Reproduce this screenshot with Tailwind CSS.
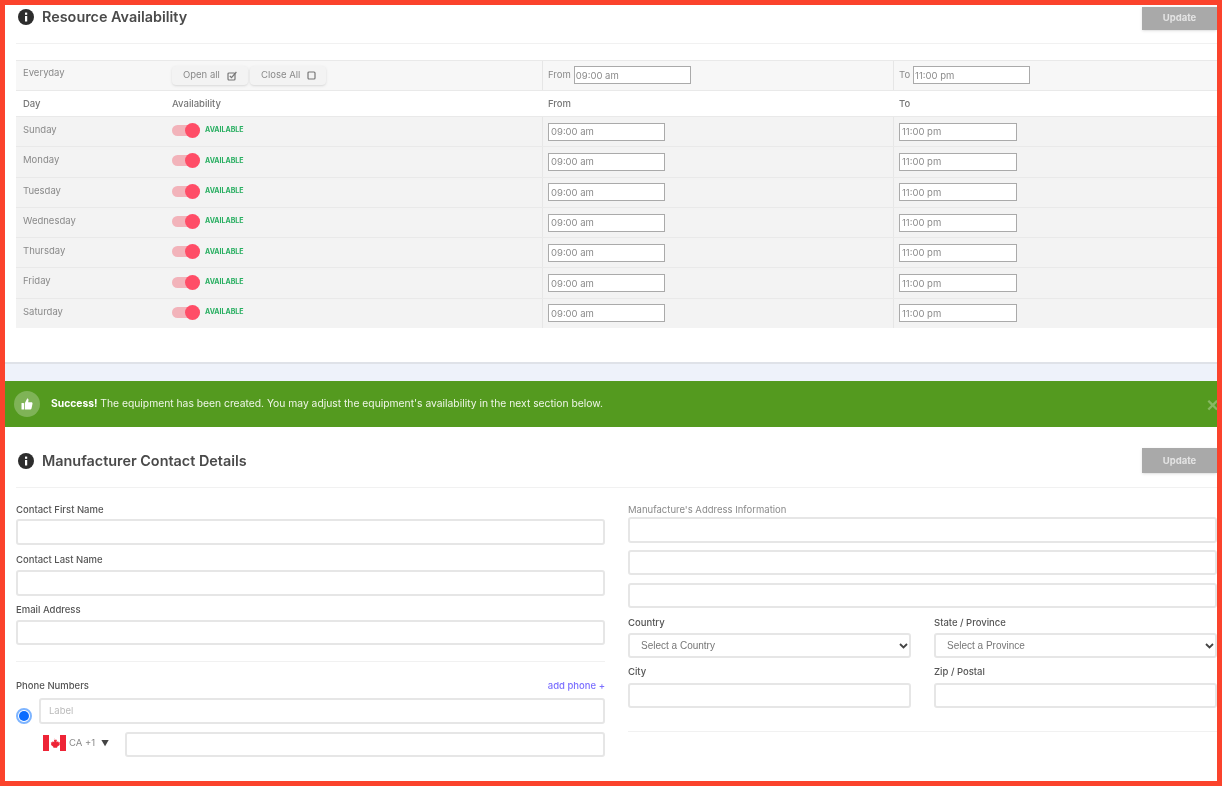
<!DOCTYPE html>
<html lang="en">
	<head>
		<meta charset="UTF-8" />
		<script src="https://cdn.jsdelivr.net/npm/@tailwindcss/browser@4"></script>
		<title>Resource Availability</title>
	</head>

	<body class="bg-white font-['Inter',sans-serif] text-[#8a8a8a]">
		<div class="relative w-[1222px] h-[786px]">
			<div class="h-full overflow-hidden bg-white blur-[0.5px]">
				<!-- resource availability -->
				<section class="h-[364px] w-[1217px] border-b-2 border-[#dfe2e8]">
					<div class="flex justify-between h-[44px] ml-[16px] border-b border-[#f1f1f1]">
						<div class="flex items-center gap-[8px] h-[34px] pl-[2px]">
							<svg class="w-[16px] h-[16px]" viewBox="0 0 16 16"><circle cx="8" cy="8" r="8" fill="#2d2d2d" /><rect x="7" y="7" width="2.2" height="5.5" fill="#fff" /><rect x="7" y="3.6" width="2.2" height="2.2" fill="#fff" /></svg>
							<h2 class="text-[14.4px] font-semibold text-[#4a4a4a]">Resource Availability</h2>
						</div>
						<button class="mt-[7px] w-[75px] h-[23px] bg-[#a9a9a9] text-[#e4e4e4] text-[9.5px] font-bold shadow-sm">Update</button>
					</div>

					<div class="ml-[16px] mt-[16px] text-[9.5px]">
						<div class="grid grid-cols-[156px_370px_351px_1fr] h-[31px] bg-[#f7f7f7] border-y border-[#e9e9e9]">
							<div class="pl-[7px] pt-[5px]">Everyday</div>
							<div class="flex items-start pt-[5px] gap-[2px]">
								<span class="flex items-center gap-[7px] w-[76px] h-[19px] pl-[11px] bg-[#f3f3f3] rounded-sm shadow-sm">Open all
									<svg class="w-[10px] h-[10px]" viewBox="0 0 10 10" fill="none" stroke="#777" stroke-width="1.2"><rect x="1" y="2" width="7" height="7" rx="1" /><path d="M2.8 5l1.7 1.7L9.4 1" /></svg>
								</span>
								<span class="flex items-center gap-[7px] w-[76px] h-[19px] pl-[11px] bg-[#f3f3f3] rounded-sm shadow-sm">Close All
									<svg class="w-[9px] h-[9px]" viewBox="0 0 9 9" fill="none" stroke="#777" stroke-width="1.2"><rect x="1" y="1" width="7" height="7" rx="1" /></svg>
								</span>
							</div>
							<div class="flex items-start pt-[5px] gap-[3px] pl-[5px] border-l border-[#e6e6e6]"><span class="pt-[2px]">From</span>
								<input class="w-[117px] h-[18px] pl-[1px] bg-white border-[1.5px] border-[#aaaaaa] outline-none" value="09:00 am" />
							</div>
							<div class="flex items-start pt-[5px] gap-[3px] pl-[5px] border-l border-[#e6e6e6]"><span class="pt-[2px]">To</span>
								<input class="w-[117px] h-[18px] pl-[1px] bg-white border-[1.5px] border-[#aaaaaa] outline-none" value="11:00 pm" />
							</div>
						</div>

						<div class="grid grid-cols-[156px_370px_351px_1fr] items-center h-[25px] pt-[1px] font-medium text-[#777]">
							<div class="pl-[7px]">Day</div>
							<div>Availability</div>
							<div class="pl-[6px]">From</div>
							<div class="pl-[6px]">To</div>
						</div>

						<div class="grid grid-cols-[156px_370px_351px_1fr] h-[30.3px] bg-[#f3f3f3] border-t border-[#e9e9e9]">
							<div class="pl-[7px] pt-[6px]">Sunday</div>
							<div class="flex items-center gap-[5px] pb-[2px]">
								<span class="relative w-[28px] h-[11px] bg-[#f2b3ba] rounded-full"><span class="absolute right-0 -top-[2px] w-[15px] h-[15px] bg-[#ff4d67] rounded-full"></span></span>
								<span class="text-[7px] font-bold text-[#27ae60]">AVAILABLE</span>
							</div>
							<div class="flex items-center pl-[5px] border-l border-[#e6e6e6]"><input class="w-[117px] h-[18px] pl-[2px] bg-white border-[1.5px] border-[#aaaaaa] outline-none" value="09:00 am" /></div>
							<div class="flex items-center pl-[5px] border-l border-[#e6e6e6]"><input class="w-[118px] h-[18px] pl-[2px] bg-white border-[1.5px] border-[#aaaaaa] outline-none" value="11:00 pm" /></div>
						</div>
						<div class="grid grid-cols-[156px_370px_351px_1fr] h-[30.3px] bg-[#f3f3f3] border-t border-[#e9e9e9]">
							<div class="pl-[7px] pt-[6px]">Monday</div>
							<div class="flex items-center gap-[5px] pb-[2px]">
								<span class="relative w-[28px] h-[11px] bg-[#f2b3ba] rounded-full"><span class="absolute right-0 -top-[2px] w-[15px] h-[15px] bg-[#ff4d67] rounded-full"></span></span>
								<span class="text-[7px] font-bold text-[#27ae60]">AVAILABLE</span>
							</div>
							<div class="flex items-center pl-[5px] border-l border-[#e6e6e6]"><input class="w-[117px] h-[18px] pl-[2px] bg-white border-[1.5px] border-[#aaaaaa] outline-none" value="09:00 am" /></div>
							<div class="flex items-center pl-[5px] border-l border-[#e6e6e6]"><input class="w-[118px] h-[18px] pl-[2px] bg-white border-[1.5px] border-[#aaaaaa] outline-none" value="11:00 pm" /></div>
						</div>
						<div class="grid grid-cols-[156px_370px_351px_1fr] h-[30.3px] bg-[#f3f3f3] border-t border-[#e9e9e9]">
							<div class="pl-[7px] pt-[6px]">Tuesday</div>
							<div class="flex items-center gap-[5px] pb-[2px]">
								<span class="relative w-[28px] h-[11px] bg-[#f2b3ba] rounded-full"><span class="absolute right-0 -top-[2px] w-[15px] h-[15px] bg-[#ff4d67] rounded-full"></span></span>
								<span class="text-[7px] font-bold text-[#27ae60]">AVAILABLE</span>
							</div>
							<div class="flex items-center pl-[5px] border-l border-[#e6e6e6]"><input class="w-[117px] h-[18px] pl-[2px] bg-white border-[1.5px] border-[#aaaaaa] outline-none" value="09:00 am" /></div>
							<div class="flex items-center pl-[5px] border-l border-[#e6e6e6]"><input class="w-[118px] h-[18px] pl-[2px] bg-white border-[1.5px] border-[#aaaaaa] outline-none" value="11:00 pm" /></div>
						</div>
						<div class="grid grid-cols-[156px_370px_351px_1fr] h-[30.3px] bg-[#f3f3f3] border-t border-[#e9e9e9]">
							<div class="pl-[7px] pt-[6px]">Wednesday</div>
							<div class="flex items-center gap-[5px] pb-[2px]">
								<span class="relative w-[28px] h-[11px] bg-[#f2b3ba] rounded-full"><span class="absolute right-0 -top-[2px] w-[15px] h-[15px] bg-[#ff4d67] rounded-full"></span></span>
								<span class="text-[7px] font-bold text-[#27ae60]">AVAILABLE</span>
							</div>
							<div class="flex items-center pl-[5px] border-l border-[#e6e6e6]"><input class="w-[117px] h-[18px] pl-[2px] bg-white border-[1.5px] border-[#aaaaaa] outline-none" value="09:00 am" /></div>
							<div class="flex items-center pl-[5px] border-l border-[#e6e6e6]"><input class="w-[118px] h-[18px] pl-[2px] bg-white border-[1.5px] border-[#aaaaaa] outline-none" value="11:00 pm" /></div>
						</div>
						<div class="grid grid-cols-[156px_370px_351px_1fr] h-[30.3px] bg-[#f3f3f3] border-t border-[#e9e9e9]">
							<div class="pl-[7px] pt-[6px]">Thursday</div>
							<div class="flex items-center gap-[5px] pb-[2px]">
								<span class="relative w-[28px] h-[11px] bg-[#f2b3ba] rounded-full"><span class="absolute right-0 -top-[2px] w-[15px] h-[15px] bg-[#ff4d67] rounded-full"></span></span>
								<span class="text-[7px] font-bold text-[#27ae60]">AVAILABLE</span>
							</div>
							<div class="flex items-center pl-[5px] border-l border-[#e6e6e6]"><input class="w-[117px] h-[18px] pl-[2px] bg-white border-[1.5px] border-[#aaaaaa] outline-none" value="09:00 am" /></div>
							<div class="flex items-center pl-[5px] border-l border-[#e6e6e6]"><input class="w-[118px] h-[18px] pl-[2px] bg-white border-[1.5px] border-[#aaaaaa] outline-none" value="11:00 pm" /></div>
						</div>
						<div class="grid grid-cols-[156px_370px_351px_1fr] h-[30.3px] bg-[#f3f3f3] border-t border-[#e9e9e9]">
							<div class="pl-[7px] pt-[6px]">Friday</div>
							<div class="flex items-center gap-[5px] pb-[2px]">
								<span class="relative w-[28px] h-[11px] bg-[#f2b3ba] rounded-full"><span class="absolute right-0 -top-[2px] w-[15px] h-[15px] bg-[#ff4d67] rounded-full"></span></span>
								<span class="text-[7px] font-bold text-[#27ae60]">AVAILABLE</span>
							</div>
							<div class="flex items-center pl-[5px] border-l border-[#e6e6e6]"><input class="w-[117px] h-[18px] pl-[2px] bg-white border-[1.5px] border-[#aaaaaa] outline-none" value="09:00 am" /></div>
							<div class="flex items-center pl-[5px] border-l border-[#e6e6e6]"><input class="w-[118px] h-[18px] pl-[2px] bg-white border-[1.5px] border-[#aaaaaa] outline-none" value="11:00 pm" /></div>
						</div>
						<div class="grid grid-cols-[156px_370px_351px_1fr] h-[30.3px] bg-[#f3f3f3] border-t border-[#e9e9e9]">
							<div class="pl-[7px] pt-[6px]">Saturday</div>
							<div class="flex items-center gap-[5px] pb-[2px]">
								<span class="relative w-[28px] h-[11px] bg-[#f2b3ba] rounded-full"><span class="absolute right-0 -top-[2px] w-[15px] h-[15px] bg-[#ff4d67] rounded-full"></span></span>
								<span class="text-[7px] font-bold text-[#27ae60]">AVAILABLE</span>
							</div>
							<div class="flex items-center pl-[5px] border-l border-[#e6e6e6]"><input class="w-[117px] h-[18px] pl-[2px] bg-white border-[1.5px] border-[#aaaaaa] outline-none" value="09:00 am" /></div>
							<div class="flex items-center pl-[5px] border-l border-[#e6e6e6]"><input class="w-[118px] h-[18px] pl-[2px] bg-white border-[1.5px] border-[#aaaaaa] outline-none" value="11:00 pm" /></div>
						</div>
					</div>
				</section>

				<div class="h-[17px] bg-[#eef2fa]"></div>

				<!-- success banner -->
				<div class="relative flex items-center gap-[11px] h-[46px] pl-[14px] bg-[#549a1f] text-[10.3px] text-[#eef5e6]">
					<span class="flex items-center justify-center w-[26px] h-[26px] bg-white/25 rounded-full">
						<svg class="w-[12px] h-[12px]" viewBox="0 0 12 12" fill="#fff"><rect x="0.5" y="5" width="2.5" height="6.5" rx="0.5" /><path d="M3.8 5.2 6.2.6c.9 0 1.4.6 1.3 1.5L7.2 4.3h3.2c.8 0 1.3.7 1.1 1.4l-1 4.8c-.2.6-.6 1-1.2 1H3.8z" /></svg>
					</span>
					<p><b class="font-bold text-white">Success!</b> The equipment has been created. You may adjust the equipment's availability in the next section below.</p>
					<span class="absolute left-[1206px] top-[12px] text-[16px] font-bold text-white/30">✕</span>
				</div>

				<!-- manufacturer contact -->
				<section class="w-[1217px] pl-[16px]">
					<div class="flex justify-between h-[61px] border-b border-[#f1f1f1]">
						<div class="flex items-center gap-[8px] h-[67px] pl-[2px]">
							<svg class="w-[16px] h-[16px]" viewBox="0 0 16 16"><circle cx="8" cy="8" r="8" fill="#2d2d2d" /><rect x="7" y="7" width="2.2" height="5.5" fill="#fff" /><rect x="7" y="3.6" width="2.2" height="2.2" fill="#fff" /></svg>
							<h2 class="text-[14.4px] font-semibold text-[#4a4a4a]">Manufacturer Contact Details</h2>
						</div>
						<button class="mt-[21px] w-[75px] h-[25px] pt-[2px] bg-[#a9a9a9] text-[#e4e4e4] text-[9.5px] font-bold shadow-sm">Update</button>
					</div>

					<div class="grid grid-cols-[589px_589px] gap-x-[23px]">
						<div>
							<label class="block mt-[15px] h-[16px] text-[9.5px] font-medium text-[#555]">Contact First Name</label>
							<input class="block w-full h-[26px] bg-white border-2 border-[#e6e6e6] rounded-[3px]" />
							<label class="block mt-[8px] h-[17px] text-[9.5px] font-medium text-[#555]">Contact Last Name</label>
							<input class="block w-full h-[26px] bg-white border-2 border-[#e6e6e6] rounded-[3px]" />
							<label class="block mt-[7px] h-[17px] text-[9.5px] font-medium text-[#555]">Email Address</label>
							<input class="block w-full h-[25px] bg-white border-2 border-[#e6e6e6] rounded-[3px]" />
							<div class="mt-[16px] h-px bg-[#f1f1f1]"></div>

							<div class="flex justify-between items-center mt-[18px] h-[12px] text-[9.5px] font-medium text-[#555]">
								<span>Phone Numbers</span>
								<span class="text-[#7b6fff]">add phone +</span>
							</div>
							<div class="flex items-center gap-[7px] mt-[5px] h-[27px]">
								<span class="flex-none flex items-center justify-center w-[16px] h-[16px] mt-[11px] border-2 border-[#7db4ff] rounded-full bg-white"><span class="w-[10px] h-[10px] bg-[#0a6cff] rounded-full"></span></span>
								<input class="flex-1 h-[26px] pl-[8px] text-[9.5px] bg-white border-2 border-[#e6e6e6] rounded-[3px] placeholder:text-[#bbb]" placeholder="Label" />
							</div>
							<div class="flex items-center mt-[7px] h-[26px] pl-[27px]">
								<svg class="flex-none w-[23px] h-[16px] mb-[2px]" viewBox="0 0 23 16"><rect width="23" height="16" fill="#fff" /><rect width="6" height="16" fill="#ee2436" /><rect x="17" width="6" height="16" fill="#ee2436" /><path d="M11.5 3l1.2 2.2 1.2-.6-.4 2.6 1.6-1 .5 1.3 1.4-.2-.6 2 .6.4-2.8 2-.1 1h-3.7l-.1-1-2.5-2 .6-.4-.6-2 1.4.2.5-1.3 1.6 1-.4-2.6 1.2.6z" fill="#ee2436" /></svg>
								<span class="ml-[3px] mb-[2px] w-[27px] text-[9.5px] text-[#8a8a8a]">CA +1</span>
								<span class="ml-[5px] mb-[2px] text-[8px] text-[#444]">▼</span>
								<input class="ml-[16px] flex-1 h-[25px] bg-white border-2 border-[#e6e6e6] rounded-[3px]" />
							</div>
						</div>

						<div>
							<label class="block mt-[15px] h-[14px] text-[9.5px] text-[#8a8a8a]">Manufacture's Address Information</label>
							<input class="block w-full h-[26px] bg-white border-2 border-[#e6e6e6] rounded-[3px]" />
							<input class="block w-full h-[25px] mt-[7px] bg-white border-2 border-[#e6e6e6] rounded-[3px]" />
							<input class="block w-full h-[25px] mt-[8px] bg-white border-2 border-[#e6e6e6] rounded-[3px]" />

							<div class="grid grid-cols-[283px_283px] gap-x-[23px] mt-[8px]">
								<div>
									<label class="block h-[17px] text-[9.5px] font-medium text-[#555]">Country</label>
									<div class="relative">
										<select class="block w-full h-[25px] pl-[11px] appearance-none font-['Liberation_Sans',sans-serif] text-[10px] text-[#777] bg-white border-2 border-[#e6e6e6] rounded-[3px]"><option>Select a Country</option></select>
										<svg class="absolute right-[3px] top-[10px] w-[9px] h-[6px]" viewBox="0 0 9 6" fill="none" stroke="#444" stroke-width="1.8"><path d="M1 1l3.5 3.5L8 1" /></svg>
									</div>
								</div>
								<div>
									<label class="block h-[17px] text-[9.5px] font-medium text-[#555]">State / Province</label>
									<div class="relative">
										<select class="block w-full h-[25px] pl-[11px] appearance-none font-['Liberation_Sans',sans-serif] text-[10px] text-[#777] bg-white border-2 border-[#e6e6e6] rounded-[3px]"><option>Select a Province</option></select>
										<svg class="absolute right-[3px] top-[10px] w-[9px] h-[6px]" viewBox="0 0 9 6" fill="none" stroke="#444" stroke-width="1.8"><path d="M1 1l3.5 3.5L8 1" /></svg>
									</div>
								</div>
								<div>
									<label class="block mt-[7px] h-[18px] text-[9.5px] font-medium text-[#555]">City</label>
									<input class="block w-full h-[25px] bg-white border-2 border-[#e6e6e6] rounded-[3px]" />
								</div>
								<div>
									<label class="block mt-[7px] h-[18px] text-[9.5px] font-medium text-[#555]">Zip / Postal</label>
									<input class="block w-full h-[25px] bg-white border-2 border-[#e6e6e6] rounded-[3px]" />
								</div>
							</div>
							<div class="mt-[23px] h-px bg-[#f1f1f1]"></div>
						</div>
					</div>
				</section>
			</div>

			<!-- red annotation frame -->
			<div class="absolute inset-0 border-[5px] border-[#fb432c] pointer-events-none"></div>
		</div>
	</body>
</html>
